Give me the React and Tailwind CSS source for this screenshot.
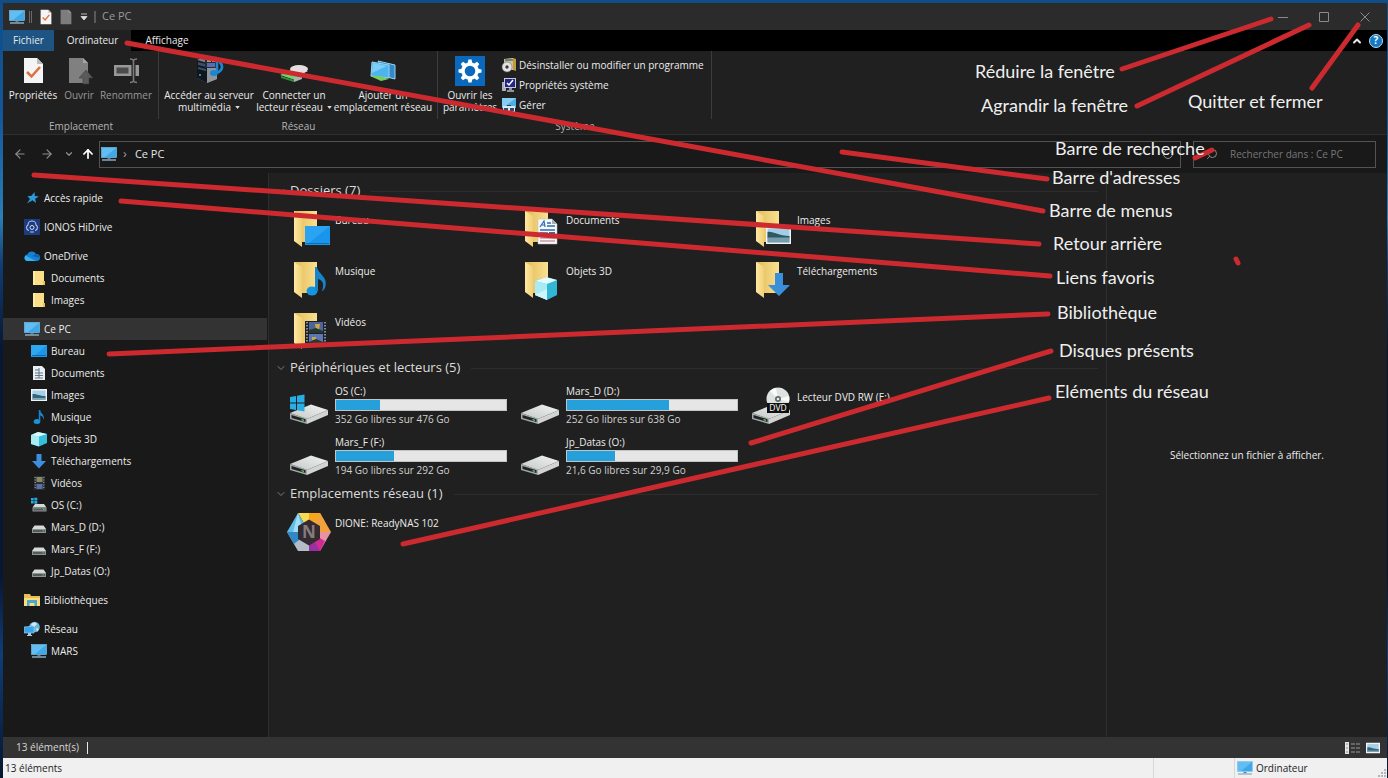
import { ChevronDown, ChevronUp, ArrowLeft, ArrowRight, ArrowUp, RotateCw, Search } from "lucide-react";

function MonitorIcon({ className = "size-4" }) {
  return (
    <svg viewBox="0 0 16 16" className={className} aria-hidden="true">
      <rect x="0.5" y="1.5" width="15" height="10" fill="#3fa9e8" stroke="#8cc9ee" strokeWidth="0.6" />
      <path d="M1 2h14L4 11H1z" fill="#7fd0fa" opacity="0.55" />
      <path d="M6.5 12h3v1.3h-3z" fill="#5b7d94" />
      <path d="M1 13.3h14v1.4H1z" fill="#8fb4c9" />
    </svg>
  );
}

function CheckDocIcon({ className = "size-4" }) {
  return (
    <svg viewBox="0 0 20 26" className={className} aria-hidden="true">
      <path d="M1 1h13l5 5v19H1z" fill="#f4f4f4" />
      <path d="M14 1v5h5z" fill="#bdbdbd" />
      <path d="M4.500 14l4 4 7-8.500" fill="none" stroke="#dc7140" strokeWidth="2.300" />
    </svg>
  );
}

function GreyDocIcon({ className = "size-4" }) {
  return (
    <svg viewBox="0 0 20 26" className={className} aria-hidden="true">
      <path d="M1 1h13l5 5v19H1z" fill="#7d7d7d" />
      <path d="M14 1v5h5z" fill="#9b9b9b" />
    </svg>
  );
}

function OpenIcon() {
  return (
    <svg viewBox="0 0 32 32" className="size-8" aria-hidden="true">
      <path d="M6 3h14l5 5v20H6z" fill="#808080" />
      <path d="M20 3v5h5z" fill="#a5a5a5" />
      <path d="M23 15l7 8h-4v6h-6v-6h-4z" fill="#5a5a5a" stroke="#383838" strokeWidth="0.5" />
    </svg>
  );
}

function RenameIcon() {
  return (
    <svg viewBox="0 0 32 32" className="size-8" aria-hidden="true">
      <path d="M4 10h25v11H4z" fill="#989898" />
      <path d="M6.500 12.500h12v6h-12z" fill="#4c4c4c" />
      <path d="M20 4c2 0 3 .5 3.500 1.500C24 4.500 25 4 27 4M23.500 5v21M20 27.500c2 0 3-.5 3.500-1.500.5 1 1.500 1.500 3.500 1.500" fill="none" stroke="#202020" strokeWidth="4" />
      <path d="M20 4c2 0 3 .5 3.500 1.500C24 4.500 25 4 27 4M23.500 5v21M20 27.500c2 0 3-.5 3.500-1.500.5 1 1.500 1.500 3.500 1.500" fill="none" stroke="#7c7c7c" strokeWidth="1.600" />
    </svg>
  );
}

function PropertiesIcon() {
  return (
    <svg viewBox="0 0 32 32" className="size-8" aria-hidden="true">
      <path d="M7 3h13l6 6v19H7z" fill="#f4f4f4" />
      <path d="M20 3v6h6z" fill="#bdbdbd" />
      <path d="M10 17l4.500 4.500 8.500-9.500" fill="none" stroke="#dc7140" strokeWidth="2.500" />
    </svg>
  );
}

function MediaServerIcon() {
  return (
    <svg viewBox="0 0 32 32" className="size-8" aria-hidden="true">
      <path d="M4 5l9-4 11 4v19l-10 4-10-5z" fill="#777d83" />
      <path d="M14 8l10-3v19l-10 4z" fill="#8f959b" />
      <path d="M4 5l10 3v20L4 23z" fill="#10161e" />
      <path d="M5 7l8 2v3l-8-2zM5 12l8 2v2l-8-2z" fill="#3b5068" />
      <path d="M12 1h12v12H12z" fill="#252b3c" />
      <path d="M14 3h4v4h-4zM19 3h4v4h-4z" fill="#9ba983" />
      <path d="M14 8h8v4h-8z" fill="#586cab" />
      <circle cx="7" cy="20" r="1" fill="#4da5e0" />
      <ellipse cx="21" cy="18" rx="4" ry="3" fill="#1b87d0" />
      <path d="M24 18V3c1 4 6 5 5 10-1 3-3 4-5 5" fill="none" stroke="#1b87d0" strokeWidth="2.500" />
    </svg>
  );
}

function NetworkDriveIcon() {
  return (
    <svg viewBox="0 0 32 32" className="size-8" aria-hidden="true">
      <path d="M3 19l15-6 12 3-14 7z" fill="#e4e6e6" />
      <ellipse cx="21" cy="14" rx="9" ry="4" fill="#e6dede" />
      <path d="M2 20l6-2 15 5-6 2z" fill="#74d268" />
      <path d="M3 21l13 4v2L3 23z" fill="#328d3c" />
      <path d="M16 23l8-3v4l-8 3z" fill="#a8b5b5" />
    </svg>
  );
}

function NetworkPlaceIcon() {
  return (
    <svg viewBox="0 0 32 32" className="size-8" aria-hidden="true">
      <path d="M11 6l17 4v14l-8-2z" fill="#3489c6" stroke="#96d5f3" />
      <path d="M5 7l17 3v13L4 21z" fill="#4eb4ee" stroke="#96d5f3" />
      <path d="M6 8l14 3L5 18z" fill="#9adffc" opacity="0.6" />
      <path d="M3 21l10 0 9 3-8 2z" fill="#78cd60" />
    </svg>
  );
}

function SettingsIcon() {
  const teeth = [0, 45, 90, 135, 180, 225, 270, 315];
  return (
    <svg viewBox="0 0 32 32" className="size-8" aria-hidden="true">
      <path d="M1 1h30v30H1z" fill="#0a69bd" />
      {teeth.map((angle) => (
        <path key={angle} d="M13.700 8l.7-3.500h3.200l.7 3.500z" fill="#fff" transform={`rotate(${angle} 16 16)`} />
      ))}
      <circle cx="16" cy="16" r="7" fill="none" stroke="#fff" strokeWidth="3.400" />
    </svg>
  );
}

function UninstallIcon() {
  return (
    <svg viewBox="0 0 16 16" className="size-4" aria-hidden="true">
      <path d="M3 2l9-1v12H3z" fill="#c4c0b4" />
      <path d="M12 1l3 1v12l-3-1z" fill="#c49a36" />
      <path d="M4 2h8v2H4z" fill="#6f8a5c" />
      <circle cx="6" cy="10" r="5" fill="#e4e4e4" stroke="#6f6f6f" strokeWidth="0.600" />
      <circle cx="6" cy="10" r="1.700" fill="#3b3b3b" />
    </svg>
  );
}

function SystemIcon() {
  return (
    <svg viewBox="0 0 16 16" className="size-4" aria-hidden="true">
      <path d="M1 5h4v9H1z" fill="#a9aeb6" />
      <path d="M3 1h12v10H3z" fill="#c6c9d3" />
      <path d="M4 2h10v8H4z" fill="#23248c" />
      <path d="M6 6l2 2 4-5" fill="none" stroke="#fff" strokeWidth="1.500" />
      <path d="M8 11h3v2h2v2H6v-2h2z" fill="#8e929c" />
    </svg>
  );
}

function ManageIcon() {
  return (
    <svg viewBox="0 0 16 16" className="size-4" aria-hidden="true">
      <path d="M1 1h14v10H1z" fill="#4eafe5" />
      <path d="M1 1h14L3 10H1z" fill="#9cdaf7" opacity="0.700" />
      <path d="M2 9h12v6H2z" fill="#dde6ed" />
      <path d="M3 11h4v3H3zM9 11h4v3H9z" fill="#284d78" />
      <path d="M6 8h4v1H6z" fill="#28405c" />
    </svg>
  );
}

function StarIcon() {
  return (
    <svg viewBox="0 0 16 16" className="size-4" aria-hidden="true">
      <path d="M10.500 2l.3 4 4.200.5-3.800 2.300.8 4.200-3.500-2.700L3 13.500l3-4.500L3.500 6.200l4-.4z" fill="#2b9bd9" />
    </svg>
  );
}

function HiDriveIcon() {
  return (
    <svg viewBox="0 0 16 16" className="size-4" aria-hidden="true">
      <path d="M0 0h16v16H0z" fill="#1d3b80" />
      <path d="M5 11.500A3 3 0 0 1 4 6a4 4 0 0 1 8 0 3 3 0 0 1-1 5.500" fill="none" stroke="#b8c6e6" strokeWidth="1.100" />
      <circle cx="8" cy="8.500" r="2" fill="none" stroke="#d5def1" />
      <path d="M6 13h4" stroke="#b8c6e6" />
    </svg>
  );
}

function CloudIcon() {
  return (
    <svg viewBox="0 0 16 16" className="size-4" aria-hidden="true">
      <path d="M3.500 13a3.300 3.300 0 0 1-.3-6.500A5 5 0 0 1 12 6a3.500 3.500 0 0 1 1 7z" fill="#1682d4" />
      <path d="M3 13a3.200 3.200 0 0 1-1.500-5.500L10 12l2.500 1z" fill="#35b2f2" />
      <path d="M8 8l4-2a3.500 3.500 0 0 1 3.500 4z" fill="#0f62b5" />
    </svg>
  );
}

function SmallFolderIcon() {
  return (
    <svg viewBox="0 0 16 16" className="size-4" aria-hidden="true">
      <path d="M2 1h11v14H2z" fill="#fbdf88" />
      <path d="M12 11h2v4h-2z" fill="#e9bd57" />
      <path d="M2 1h2v14H2z" fill="#ffeaa6" />
    </svg>
  );
}

function DesktopIcon() {
  return (
    <svg viewBox="0 0 16 16" className="size-4" aria-hidden="true">
      <path d="M0 2h16v12H0z" fill="#1b96e9" />
      <path d="M0 2h16L3 13H0z" fill="#3cb2fa" opacity="0.600" />
      <path d="M1 12.500h14" stroke="#0b5d9e" strokeWidth="0.800" />
    </svg>
  );
}

function DocIcon() {
  return (
    <svg viewBox="0 0 16 16" className="size-4" aria-hidden="true">
      <path d="M2 1h9l3 3v11H2z" fill="#e9eff2" />
      <path d="M4 5h4M4 8h8M4 10.500h8M4 13h8M8 3v10" stroke="#5d7987" strokeWidth="1" />
    </svg>
  );
}

function PictureIcon({ className = "size-4" }) {
  return (
    <svg viewBox="0 0 16 16" className={className} aria-hidden="true">
      <path d="M0 2h16v12H0z" fill="#f0f4f6" />
      <path d="M1.500 3.500h13v9h-13z" fill="#a6d0e8" />
      <path d="M1.500 7c5 0 7 2 13 2v3.500h-13z" fill="#386478" />
      <path d="M1.500 11h13v1.500h-13z" fill="#83a9b8" />
    </svg>
  );
}

function MusicIcon() {
  return (
    <svg viewBox="0 0 16 16" className="size-4" aria-hidden="true">
      <ellipse cx="6" cy="12.500" rx="3.300" ry="2.500" fill="#1695dc" />
      <path d="M7.800 1h1.500c0 4 5 4 3.200 10-.3-3-1.500-4-3.200-4.500V12H7.800z" fill="#1687cc" />
    </svg>
  );
}

function CubeIcon() {
  return (
    <svg viewBox="0 0 16 16" className="size-4" aria-hidden="true">
      <path d="M0 4l7-3 9 2v9l-8 3.500L0 13z" fill="#35bfd8" />
      <path d="M0 4l8 1.500v10L0 13z" fill="#a9ecf4" />
      <path d="M0 4l7-3 9 2-8 2.500z" fill="#dcf9fc" />
    </svg>
  );
}

function DownloadIcon() {
  return (
    <svg viewBox="0 0 16 16" className="size-4" aria-hidden="true">
      <path d="M5.500 1h5v7H15l-7 7.500L1 8h4.500z" fill="#3d8fdd" />
    </svg>
  );
}

function VideoIcon() {
  return (
    <svg viewBox="0 0 16 16" className="size-4" aria-hidden="true">
      <path d="M3 1h11v14H3z" fill="#2b2d32" />
      <path d="M5.500 2h6v5h-6z" fill="#898a61" />
      <path d="M5.500 9h6v5h-6z" fill="#5571ac" />
      <path d="M4.200 2v12M12.800 2v12" stroke="#aab0b6" strokeWidth="1" strokeDasharray="1 1.500" />
    </svg>
  );
}

function SmallDriveIcon() {
  return (
    <svg viewBox="0 0 16 16" className="size-4" aria-hidden="true">
      <path d="M3.500 6.500h9L15 10H1z" fill="#d6d9da" />
      <path d="M1 10h14v4H1z" fill="#8e9395" />
      <path d="M2 11h12v2H2z" fill="#55595b" />
      <path d="M11.500 11.500h1.500v1h-1.500z" fill="#4bd060" />
    </svg>
  );
}

function SmallSystemDriveIcon() {
  return (
    <svg viewBox="0 0 16 16" className="size-4" aria-hidden="true">
      <path d="M0 1h2.700v2.500H0zM3.300 0.700h3v2.800h-3zM0 4h2.700v2.500H0zM3.300 4h3v2.800h-3z" fill="#29a8e0" />
      <path d="M4 7h9l2.500 3.500H1.500z" fill="#d6d9da" />
      <path d="M1.500 10.500h14v4h-14z" fill="#8e9395" />
      <path d="M2.500 11.500h12v2h-12z" fill="#55595b" />
      <path d="M12 12h1.500v1H12z" fill="#4bd060" />
    </svg>
  );
}

function LibraryIcon() {
  return (
    <svg viewBox="0 0 16 16" className="size-4" aria-hidden="true">
      <path d="M0 2h6l1 2h9v10H0z" fill="#e9bd55" />
      <path d="M0 6h16v8H0z" fill="#fadb7d" />
      <path d="M3 8h10v6h-2.500v-3h-5v3H3z" fill="#49a9c7" />
    </svg>
  );
}

function NetworkIcon() {
  return (
    <svg viewBox="0 0 16 16" className="size-4" aria-hidden="true">
      <circle cx="10.500" cy="6" r="5.300" fill="#6db4dc" />
      <path d="M7 4c2-3 4-3 6-1l-3 3zM12 7l3 1-2 3z" fill="#d3eaf2" />
      <path d="M0 6l10-1v7L0 12z" fill="#3ba4e8" stroke="#9fd6f6" strokeWidth="0.600" />
      <path d="M4 12h3v2h1v1H3v-1h1z" fill="#a5c8dd" />
    </svg>
  );
}

function BigFolder({ children }) {
  return (
    <svg viewBox="0 0 44 48" className="h-12 w-11 shrink-0" aria-hidden="true">
      <defs>
        <linearGradient id="folderBack" x1="0" x2="1">
          <stop offset="0" stopColor="#e2bb58" />
          <stop offset="1" stopColor="#fae090" />
        </linearGradient>
        <linearGradient id="folderFront" x1="0" x2="1">
          <stop offset="0" stopColor="#ffe9a3" />
          <stop offset="1" stopColor="#f0cf76" />
        </linearGradient>
      </defs>
      <path d="M7 6h23v31H13z" fill="url(#folderBack)" />
      <path d="M7 6l8 5v31l-8-6z" fill="url(#folderFront)" />
      {children}
    </svg>
  );
}

function BigDrive({ system = false, dvd = false }) {
  return (
    <svg viewBox="0 0 44 48" className="h-12 w-11 shrink-0" aria-hidden="true">
      <defs>
        <linearGradient id="driveTop" x1="0" y1="1" x2="1" y2="0">
          <stop offset="0" stopColor="#c6c8c8" />
          <stop offset="1" stopColor="#f2f3f3" />
        </linearGradient>
      </defs>
      <path d="M3 31l21-8.500L41 28 20 37z" fill="url(#driveTop)" />
      <path d="M20 37l21-9v5l-21 9z" fill="#d2d4d4" />
      <path d="M3 31l17 5.500V42L3 37z" fill="#a5a9a9" />
      <path d="M4.500 33l14 4.300v2.700l-14-4z" fill="#202524" />
      <path d="M14.500 37l2.500.8v1.300l-2.500-.8z" fill="#4ede66" />
      {system ? (
        <path d="M3 15l6-1v6.500H3zM10 13.800l7.500-1.300v8H10zM3 21.500h6V28l-6-1zM10 21.500h7.500v8L10 28.200z" fill="#28aee4" />
      ) : null}
      {dvd ? (
        <>
          <circle cx="29" cy="17" r="11.500" fill="#dce3e1" />
          <path d="M29 17l-8-8a11.500 11.500 0 0 1 6-3zM29 17l11 3a11.500 11.500 0 0 0 0-6z" fill="#f8fbfa" />
          <circle cx="29" cy="17" r="3" fill="#626967" />
          <circle cx="29" cy="17" r="1.300" fill="#e9eceb" />
          <path d="M18 21h22v10H18z" fill="#101010" />
          <text x="29" y="29" textAnchor="middle" fontSize="8.500" fill="#fff" fontFamily="Open Sans">DVD</text>
        </>
      ) : null}
    </svg>
  );
}

function ReadyNasIcon() {
  return (
    <svg viewBox="0 0 44 48" className="h-12 w-11 shrink-0" aria-hidden="true">
      <path d="M11 5h14l-3 19z" fill="#f8db51" />
      <path d="M22 5h11l5 9-16 10z" fill="#f7a51f" />
      <path d="M33 5l11 19H22z" fill="#f0a33c" />
      <path d="M44 24L33 43l-11-19z" fill="#e991a5" />
      <path d="M38 33l-5 10H22V24z" fill="#d12b92" />
      <path d="M33 43H14l8-19z" fill="#9a2fa2" />
      <path d="M22 43H11L0 24h22z" fill="#b4bcc7" />
      <path d="M0 24L11 5l11 19z" fill="#5dbde9" />
      <path d="M0 24h22L7 36z" fill="#3089c6" />
      <path d="M11 5l5 19H6z" fill="#a3dcf3" />
      <path d="M22 11.500L33 18v13l-11 6.500L11 31V18z" fill="#332b31" />
      <text x="22" y="30" textAnchor="middle" fontSize="17" fontWeight="700" fill="#857c7b" fontFamily="Open Sans">N</text>
    </svg>
  );
}

const sidebar = [
  { label: "Accès rapide", icon: <StarIcon /> },
  { label: "IONOS HiDrive", icon: <HiDriveIcon />, gap: true },
  { label: "OneDrive", icon: <CloudIcon />, gap: true },
  { label: "Documents", icon: <SmallFolderIcon />, child: true },
  { label: "Images", icon: <SmallFolderIcon />, child: true },
  { label: "Ce PC", icon: <MonitorIcon />, gap: true, active: true },
  { label: "Bureau", icon: <DesktopIcon />, child: true },
  { label: "Documents", icon: <DocIcon />, child: true },
  { label: "Images", icon: <PictureIcon />, child: true },
  { label: "Musique", icon: <MusicIcon />, child: true },
  { label: "Objets 3D", icon: <CubeIcon />, child: true },
  { label: "Téléchargements", icon: <DownloadIcon />, child: true },
  { label: "Vidéos", icon: <VideoIcon />, child: true },
  { label: "OS (C:)", icon: <SmallSystemDriveIcon />, child: true },
  { label: "Mars_D (D:)", icon: <SmallDriveIcon />, child: true },
  { label: "Mars_F (F:)", icon: <SmallDriveIcon />, child: true },
  { label: "Jp_Datas (O:)", icon: <SmallDriveIcon />, child: true },
  { label: "Bibliothèques", icon: <LibraryIcon />, gap: true },
  { label: "Réseau", icon: <NetworkIcon />, gap: true },
  { label: "MARS", icon: <MonitorIcon />, child: true },
];

const folders = [
  {
    name: "Bureau",
    art: (
      <>
        <path d="M18 21h25v19H18z" fill="#1995ec" />
        <path d="M18 21h25L22 38h-4z" fill="#3eb1fa" opacity="0.500" />
        <path d="M19 38.500h23" stroke="#0d6cb6" />
      </>
    ),
  },
  {
    name: "Documents",
    art: (
      <>
        <path d="M20 14h14l5 5v20H20z" fill="#f5f7f9" stroke="#b8bfc5" strokeWidth="0.500" />
        <path d="M34 14v5h5z" fill="#a4adb5" />
        <path d="M22 22l4-6 1 6M23.500 20h3" fill="none" stroke="#2b6cb0" strokeWidth="1.200" />
        <path d="M29 18h4M29 21h8M22 25h15M22 28h8" stroke="#2b6cb0" strokeWidth="1.300" />
        <path d="M31 27h6v4h-6z" fill="#3a67a0" />
        <path d="M22 33h15M22 36h15" stroke="#b76a72" strokeWidth="1" />
      </>
    ),
  },
  {
    name: "Images",
    art: (
      <>
        <path d="M17 22h25v17H17z" fill="#f2f5f6" />
        <path d="M18.500 23.500h22v14h-22z" fill="#a4cde6" />
        <path d="M18.500 27c6-1 10 4 22 4v2h-22z" fill="#2e5960" />
        <path d="M18.500 32.500h22v5h-22z" fill="#789dac" />
      </>
    ),
  },
  {
    name: "Musique",
    art: (
      <>
        <ellipse cx="25" cy="35" rx="5.500" ry="4.500" fill="#1794e1" />
        <path d="M28 11h2c1 7 12 10 8 21-1 1-2 3-3 3 3-8 0-11-4-12v12h-3z" fill="#1684cb" />
      </>
    ),
  },
  {
    name: "Objets 3D",
    art: (
      <>
        <path d="M17 25l11-4 11 3v15l-10 5-12-5z" fill="#31b6d5" />
        <path d="M17 25l12 3v16l-12-5z" fill="#a9eaf4" />
        <path d="M17 25l11-4 11 3-10 4z" fill="#e3fbfd" />
        <path d="M17 39l12-6v11z" fill="#dffafd" opacity="0.700" />
      </>
    ),
  },
  {
    name: "Téléchargements",
    art: <path d="M26 17h8v12h7L30 40 19 29h7z" fill="#3a8fda" />,
  },
  {
    name: "Vidéos",
    art: (
      <>
        <path d="M18 14h22v25H18z" fill="#1d2028" />
        <path d="M22 15h14v11H22z" fill="#4f649b" />
        <path d="M22 27h14v11H22z" fill="#5d76b4" />
        <path d="M28 17h5l-1 6h-3zM25 30h4v3h-4z" fill="#c7a947" />
        <path d="M22 23l7-2 7 3v2H22zM22 35l7-3 7 3v3H22z" fill="#26392f" />
        <path d="M20 15v23M38 15v23" stroke="#a9adb5" strokeWidth="1.500" strokeDasharray="1.500 1.500" />
      </>
    ),
  },
];

const drives = [
  { name: "OS (C:)", used: 26, info: "352 Go libres sur 476 Go", system: true },
  { name: "Mars_D (D:)", used: 60, info: "252 Go libres sur 638 Go" },
  { name: "Lecteur DVD RW (E:)", dvd: true },
  { name: "Mars_F (F:)", used: 34, info: "194 Go libres sur 292 Go" },
  { name: "Jp_Datas (O:)", used: 28, info: "21,6 Go libres sur 29,9 Go" },
];

const strokes = [
  "M1122 69L1271 19",
  "M1137 106L1309 25",
  "M1312 88L1358 25",
  "M1195 158L1212 150",
  "M842 152L1047 179",
  "M127 43L1043 211",
  "M34 175L1039 244",
  "M121 201L1050 276",
  "M109 354L1048 314",
  "M751 443L1051 351",
  "M403 544L1049 398",
  "M1236 259L1238 263",
];

const notes = [
  { text: "Réduire la fenêtre", place: "left-[975px] top-[59px]" },
  { text: "Agrandir la fenêtre", place: "left-[981px] top-[93px]" },
  { text: "Quitter et fermer", place: "left-[1188px] top-[89px]" },
  { text: "Barre de recherche", place: "left-[1055px] top-[136px]" },
  { text: "Barre d'adresses", place: "left-[1052px] top-[165px]" },
  { text: "Barre de menus", place: "left-[1049px] top-[198px]" },
  { text: "Retour arrière", place: "left-[1053px] top-[231px]" },
  { text: "Liens favoris", place: "left-[1056px] top-[265px]" },
  { text: "Bibliothèque", place: "left-[1057px] top-[300px]" },
  { text: "Disques présents", place: "left-[1059px] top-[338px]" },
  { text: "Eléments du réseau", place: "left-[1055px] top-[379px]" },
];

function TitleBar() {
  return (
    <header className="flex h-[27px] items-center bg-[#2b2b2b] pl-[6px] pr-0.5">
      <MonitorIcon />
      <span className="ml-1 h-3 w-[3px] border-x border-[#686868]" />
      <button aria-label="Propriétés" className="ml-2">
        <CheckDocIcon className="h-4 w-3" />
      </button>
      <button aria-label="Nouveau dossier" className="ml-2">
        <GreyDocIcon className="h-4 w-3" />
      </button>
      <button aria-label="Personnaliser" className="ml-2">
        <svg viewBox="0 0 8 8" className="size-2" aria-hidden="true">
          <path d="M1 1h6M1 3.500h6L4 7z" fill="#ddd" stroke="#ddd" strokeWidth="0.800" />
        </svg>
      </button>
      <span className="ml-1.5 h-3 w-[2px] bg-[#5a5a5a]" />
      <h1 className="ml-1.5 text-[11px] text-[#9a9a9a]">Ce PC</h1>
      <div className="ml-auto flex text-[#8a8a8a]">
        <button aria-label="Réduire" className="flex w-[41px] justify-center">
          <svg viewBox="0 0 10 10" className="size-2.5" fill="none" stroke="currentColor" aria-hidden="true">
            <path d="M0 5.500h10" />
          </svg>
        </button>
        <button aria-label="Agrandir" className="flex w-[41px] justify-center">
          <svg viewBox="0 0 10 10" className="size-2.5" fill="none" stroke="currentColor" aria-hidden="true">
            <path d="M.5.5h9v9h-9z" />
          </svg>
        </button>
        <button aria-label="Fermer" className="flex w-[41px] justify-center">
          <svg viewBox="0 0 10 10" className="size-2.5" fill="none" stroke="currentColor" aria-hidden="true">
            <path d="M.5.5l9 9M9.500.5l-9 9" />
          </svg>
        </button>
      </div>
    </header>
  );
}

function Tabs() {
  return (
    <div className="flex h-[21px] bg-black text-[10px] text-[#e8e8e8]">
      <button className="w-[51px] bg-[#1d5484]">Fichier</button>
      <button className="w-[77px] bg-[#202020]">Ordinateur</button>
      <button className="w-[72px]">Affichage</button>
      <div className="ml-auto flex items-center gap-1.5 pr-1">
        <button aria-label="Réduire le ruban">
          <ChevronUp className="size-3" strokeWidth={4} />
        </button>
        <button aria-label="Aide" className="flex size-[14px] items-center justify-center rounded-full border border-[#b9d9ef] bg-[#1379c4] text-[10px] font-bold text-white">
          ?
        </button>
      </div>
    </div>
  );
}

function RibbonButton({ icon, lines, width, muted, menu }) {
  return (
    <button className={`flex flex-col items-center ${width} ${muted ? "text-[#989898]" : "text-[#ececec]"}`}>
      <span className="mb-0.5">{icon}</span>
      {lines.map((line, index) => (
        <span key={line} className="flex items-center whitespace-nowrap leading-[12px]">
          {line}
          {menu && index === lines.length - 1 ? (
            <svg viewBox="0 0 6 4" className="ml-1 h-[3px] w-[5px]" aria-hidden="true">
              <path d="M0 0h6L3 4z" fill="#ddd" />
            </svg>
          ) : null}
        </span>
      ))}
    </button>
  );
}

function RibbonGroup({ title, width, children }) {
  return (
    <section className={`flex flex-col ${width}`}>
      <div className="flex h-[68px] border-r border-[#3c3c3c] pt-1">{children}</div>
      <h2 className="text-center leading-[14px] text-[#b4b4b4]">{title}</h2>
    </section>
  );
}

function Ribbon() {
  return (
    <div className="flex h-[83px] bg-[#202020] text-[10px]">
      <RibbonGroup title="Emplacement" width="w-[156px]">
        <div className="flex items-start gap-1 pl-[5px]">
          <RibbonButton icon={<PropertiesIcon />} lines={["Propriétés"]} width="w-[50px]" />
          <RibbonButton icon={<OpenIcon />} lines={["Ouvrir"]} width="w-[34px]" muted />
          <RibbonButton icon={<RenameIcon />} lines={["Renommer"]} width="w-[52px]" muted />
        </div>
      </RibbonGroup>
      <RibbonGroup title="Réseau" width="w-[279px]">
        <div className="flex items-start pl-1">
          <RibbonButton icon={<MediaServerIcon />} lines={["Accéder au serveur", "multimédia"]} width="w-[92px]" menu />
          <RibbonButton icon={<NetworkDriveIcon />} lines={["Connecter un", "lecteur réseau"]} width="w-[78px]" menu />
          <RibbonButton icon={<NetworkPlaceIcon />} lines={["Ajouter un", "emplacement réseau"]} width="w-[100px]" />
        </div>
      </RibbonGroup>
      <RibbonGroup title="Système" width="w-[274px]">
        <div className="flex items-start gap-1 pl-[5px]">
          <RibbonButton icon={<SettingsIcon />} lines={["Ouvrir les", "paramètres"]} width="w-[54px]" />
          <div className="flex flex-col gap-1 pt-0.5 text-[#ececec]">
            <button className="flex items-center gap-0.5 whitespace-nowrap leading-[14px]"><UninstallIcon />Désinstaller ou modifier un programme</button>
            <button className="flex items-center gap-0.5 whitespace-nowrap leading-[14px]"><SystemIcon />Propriétés système</button>
            <button className="flex items-center gap-0.5 whitespace-nowrap leading-[14px]"><ManageIcon />Gérer</button>
          </div>
        </div>
      </RibbonGroup>
    </div>
  );
}

function AddressBar() {
  return (
    <div className="flex h-[39px] items-center border-t border-[#2e2e2e] bg-[#191919] pl-[10px] pr-[11px] text-[11px]">
      <nav className="flex w-[86px] items-center text-[#8e8e8e]">
        <button aria-label="Précédent" className="w-[27px]"><ArrowLeft className="size-3.5" /></button>
        <button aria-label="Suivant" className="w-[24px]"><ArrowRight className="size-3.5" /></button>
        <button aria-label="Emplacements récents" className="w-[17px]"><ChevronDown className="size-2.5" strokeWidth={3} /></button>
        <button aria-label="Monter" className="text-white"><ArrowUp className="size-3.5" strokeWidth={3} /></button>
      </nav>
      <div className="flex h-[27px] flex-1 items-center border border-[#535353] pl-px pr-[6px]">
        <MonitorIcon />
        <span className="ml-1.5 text-[13px] text-[#9a9a9a]">›</span>
        <button className="ml-2 text-[#e6e6e6]">Ce PC</button>
        <button aria-label="Historique" className="ml-auto text-[#8e8e8e]"><ChevronDown className="size-3" /></button>
        <button aria-label="Actualiser" className="ml-4 text-[#8e8e8e]"><RotateCw className="size-3" /></button>
      </div>
      <label className="ml-3 flex h-[27px] w-[183px] items-center border border-[#535353] pl-3">
        <Search className="size-3 -scale-x-100 text-[#8a8a8a]" />
        <input
          type="search"
          aria-label="Rechercher dans : Ce PC"
          placeholder="Rechercher dans : Ce PC"
          className="ml-3 min-w-0 flex-1 bg-transparent text-[10px] outline-none placeholder:text-[#777]"
        />
      </label>
    </div>
  );
}

function Sidebar() {
  return (
    <nav className="w-[266px] shrink-0 border-r border-[#2d2d2d] bg-[#191919] pr-px pt-[14px] text-[10px] text-[#ececec]">
      {sidebar.map((item, index) => (
        <a
          key={index}
          href="#"
          className={`flex h-[22px] items-center gap-1 ${item.child ? "pl-[28px]" : "pl-[21px]"} ${item.gap ? "mt-[7px]" : ""} ${item.active ? "bg-[#333]" : ""}`}
        >
          {item.icon}
          {item.label}
        </a>
      ))}
    </nav>
  );
}

function Section({ title, children }) {
  return (
    <section>
      <h2 className="-ml-[12px] flex h-5 items-center gap-[3px] text-[13px] text-[#dcdcdc]">
        <ChevronDown className="size-3 text-[#7c7c7c]" />
        {title}
        <span className="ml-2 h-px flex-1 bg-[#2d2d2d]" />
      </h2>
      <div className="grid grid-cols-[repeat(auto-fill,231px)] pt-1">{children}</div>
    </section>
  );
}

function Drive({ drive }) {
  return (
    <a href="#" className="flex h-[51px] gap-1">
      <BigDrive system={drive.system} dvd={drive.dvd} />
      {drive.dvd ? (
        <span className="pt-2 leading-[14px]">{drive.name}</span>
      ) : (
        <div className="w-[172px] pt-0.5">
          <p className="leading-[14px]">{drive.name}</p>
          <div role="meter" aria-label={drive.name} aria-valuenow={drive.used} aria-valuemin={0} aria-valuemax={100} className="mt-px h-3 border border-[#c4c4c4] bg-[#e6e6e6]">
            <div className="h-full bg-[#26a0da]" style={{ width: `${drive.used}%` }} />
          </div>
          <p className="mt-px leading-[14px] text-[#d0d0d0]">{drive.info}</p>
        </div>
      )}
    </a>
  );
}

function Annotations() {
  return (
    <div className="pointer-events-none absolute inset-0 overflow-hidden">
      <svg className="absolute left-0 top-0 h-[778px] w-[1388px]" aria-hidden="true">
        {strokes.map((d) => (
          <path key={d} d={d} fill="none" stroke="#cd2a30" strokeWidth="5" strokeLinecap="round" />
        ))}
      </svg>
      {notes.map((note) => (
        <p key={note.text} className={`absolute whitespace-nowrap font-[Lato,sans-serif] text-[18px] leading-[24px] text-[#efefef] ${note.place}`}>
          {note.text}
        </p>
      ))}
    </div>
  );
}

export default function App() {
  return (
    <div className="relative flex min-h-screen flex-col bg-[linear-gradient(#104d88_0%,#14579a_15%,#2a7fb5_28%,#123c75_34%,#061633_45%,#061633_74%,#0f3d78_84%,#06152e_100%)] pl-[3px] pr-px pt-[3px] font-['Open_Sans','Noto_Sans',sans-serif]">
      <TitleBar />
      <Tabs />
      <Ribbon />
      <AddressBar />
      <div className="flex flex-1">
        <Sidebar />
        <main className="min-w-0 flex-1 bg-[#202020] pl-[18px] pr-2 pt-2 text-[10px] text-[#ececec]">
          <Section title="Dossiers (7)">
            {folders.map((folder) => (
              <a key={folder.name} href="#" className="flex h-[51px] gap-1">
                <BigFolder>{folder.art}</BigFolder>
                <span className="pt-2 leading-[14px]">{folder.name}</span>
              </a>
            ))}
          </Section>
          <Section title="Périphériques et lecteurs (5)">
            {drives.map((drive) => (
              <Drive key={drive.name} drive={drive} />
            ))}
          </Section>
          <Section title="Emplacements réseau (1)">
            <a href="#" className="flex h-[51px] gap-1">
              <ReadyNasIcon />
              <span className="whitespace-nowrap pt-2 leading-[14px]">DIONE: ReadyNAS 102</span>
            </a>
          </Section>
        </main>
        <aside className="flex w-[281px] shrink-0 items-center justify-center border-l border-[#2d2d2d] bg-[#202020] text-[10px] text-[#ececec]">
          Sélectionnez un fichier à afficher.
        </aside>
      </div>
      <div className="flex h-[21px] items-center bg-[#333] pl-[13px] pr-[7px] text-[10px] text-[#d8d8d8]">
        <span>13 élément(s)</span>
        <span className="ml-2 h-3 w-px bg-[#e8e8e8]" />
        <div className="ml-auto flex items-center gap-1.5">
          <button aria-label="Détails">
            <svg viewBox="0 0 15 12" className="h-3 w-[15px]" aria-hidden="true">
              <path d="M0 0h4v12H0z" fill="#e5e5e5" />
              <path d="M1.500 1.500h1v1h-1zM1.500 5.500h1v1h-1zM1.500 9.500h1v1h-1z" fill="#333" />
              <path d="M6 2h4M11 2h4M6 6h4M11 6h4M6 10h4M11 10h4" stroke="#9a9a9a" />
            </svg>
          </button>
          <button aria-label="Grandes icônes">
            <PictureIcon className="size-3.5" />
          </button>
        </div>
      </div>
      <footer className="flex h-5 items-center bg-[#f0f0f0] text-[10px] text-[#222]">
        <span className="flex-1 pl-0.5">13 éléments</span>
        <span className="h-full w-[81px] border-l border-[#d8d8d8]" />
        <span className="flex h-full w-[153px] items-center gap-[3px] border-l border-[#d8d8d8] pl-0.5">
          <MonitorIcon />
          Ordinateur
          <svg viewBox="0 0 10 10" className="ml-auto size-2.5 self-end" aria-hidden="true">
            <path d="M7 1h2v2H7zM4 4h2v2H4zM7 4h2v2H7zM1 7h2v2H1zM4 7h2v2H4zM7 7h2v2H7z" fill="#b5b5b5" />
          </svg>
        </span>
      </footer>
      <Annotations />
    </div>
  );
}
